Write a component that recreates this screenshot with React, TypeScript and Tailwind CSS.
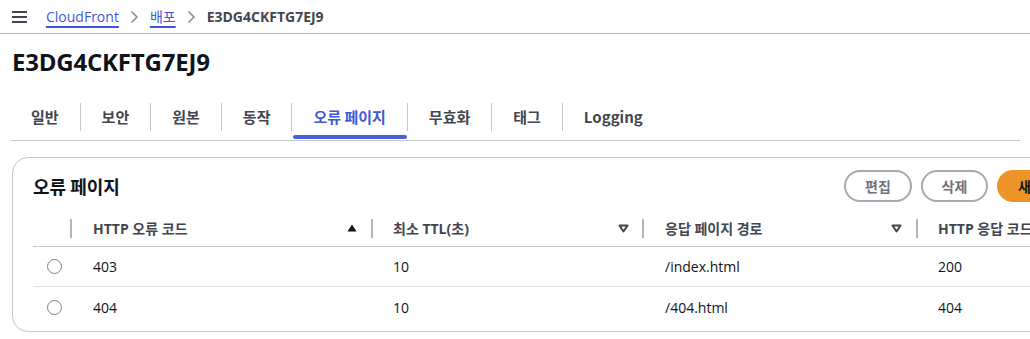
import React from 'react';

const tabs = ['일반', '보안', '원본', '동작', '오류 페이지', '무효화', '태그', 'Logging'];

const rows = [
  { code: '403', ttl: '10', path: '/index.html', resp: '200' },
  { code: '404', ttl: '10', path: '/404.html', resp: '404' },
];

const Chevron = () => (
  <svg width="9" height="14" viewBox="0 0 9 14" className="mx-[11px]">
    <polyline points="1.5,1.5 7,7 1.5,12.5" fill="none" stroke="#8c8c94" strokeWidth="1.6" />
  </svg>
);

const SortUp = () => (
  <svg width="10" height="8" viewBox="0 0 10 8">
    <polygon points="0.5,7.5 5,0.5 9.5,7.5" fill="#0f141a" />
  </svg>
);

const SortNone = () => (
  <svg width="11" height="9" viewBox="0 0 11 9">
    <polygon points="1.5,1.5 9.5,1.5 5.5,7.5" fill="none" stroke="#424650" strokeWidth="2" strokeLinejoin="round" />
  </svg>
);

const Divider = () => <span className="block h-[19px] w-[2px] bg-[#b4b4bb]" />;

export default function App() {
  return (
    <div className="w-[1030px] h-[339px] overflow-hidden bg-white text-[#0f141a] font-['Open_Sans','Noto_Sans_CJK_KR',sans-serif]">
      {/* breadcrumbs */}
      <div className="flex h-[34px] items-center border-b border-[#b4b4bb] pl-3">
        <svg width="15" height="12" viewBox="0 0 15 12">
          <path d="M0 1h15M0 6h15M0 11h15" stroke="#424650" strokeWidth="2" />
        </svg>
        <a className="ml-[19px] text-[14px] text-[#3f58d6] underline underline-offset-[4px] decoration-[1.5px]">CloudFront</a>
        <Chevron />
        <a className="text-[14px] text-[#3f58d6] underline underline-offset-[4px] decoration-[1.5px]">배포</a>
        <Chevron />
        <span className="text-[14px] font-bold text-[#424650]">E3DG4CKFTG7EJ9</span>
      </div>

      {/* title */}
      <h1 className="pl-3 pt-[13px] text-[24px] font-bold leading-[30px] tracking-[-0.2px]">E3DG4CKFTG7EJ9</h1>

      {/* tabs */}
      <div className="mx-[10px] mt-[23px] flex h-[41px] border-b border-[#c6c6cd]">
        {tabs.map((t, i) => {
          const active = t === '오류 페이지';
          return (
            <div key={t} className="relative flex items-center pb-[6px]">
              {i > 0 && <span className="block h-[28px] w-px bg-[#c6c6cd]" />}
              <span
                className={`px-[21px] text-[15px] font-bold font-['Noto_Sans_CJK_KR',sans-serif] ${
                  active ? 'text-[#3f58d6]' : 'text-[#424650]'
                }`}
              >
                {t}
              </span>
              {active && <span className="absolute bottom-[1px] left-[2px] right-0 h-[4px] rounded-full bg-[#4a5fe0]" />}
            </div>
          );
        })}
      </div>

      {/* card */}
      <div className="ml-3 mt-[16px] w-[1120px] rounded-2xl border border-[#c6c6cd] pb-[4px]">
        <div className="flex items-center justify-between pl-5 pr-5 pt-[12px]">
          <h2 className="text-[18px] font-bold font-['Noto_Sans_CJK_KR',sans-serif]">오류 페이지</h2>
          <div className="mr-[14px] flex gap-[9px]">
            <button className="h-[32px] w-[68px] rounded-full border-2 border-[#a8a8b0] text-[14px] font-bold text-[#6f727a]">편집</button>
            <button className="h-[32px] w-[67px] rounded-full border-2 border-[#a8a8b0] text-[14px] font-bold text-[#6f727a]">삭제</button>
            <button className="h-[32px] w-[100px] rounded-full bg-[#ec9427] pl-[21px] text-left text-[14px] font-bold text-[#0f141a]">새로 만들기</button>
          </div>
        </div>

        <div className="mt-[11px] pl-5">
          {/* header */}
          <div className="flex h-[34px] items-center border-b border-[#c6c6cd] pb-[3px] text-[14px] font-bold text-[#424650]">
            <div className="flex w-[39px] justify-end"><Divider /></div>
            <div className="flex w-[301px] items-center pl-[21px]">
              <span className="flex-1">HTTP 오류 코드</span>
              <SortUp />
              <span className="ml-[14px]"><Divider /></span>
            </div>
            <div className="flex w-[271px] items-center pl-[20px]">
              <span className="flex-1">최소 TTL(초)</span>
              <SortNone />
              <span className="ml-[13px]"><Divider /></span>
            </div>
            <div className="flex w-[274px] items-center pl-[21px]">
              <span className="flex-1">응답 페이지 경로</span>
              <SortNone />
              <span className="ml-[14px]"><Divider /></span>
            </div>
            <div className="pl-[20px]">HTTP 응답 코드</div>
          </div>

          {rows.map((r, i) => (
            <div
              key={r.code}
              className={`flex h-[40px] items-center text-[14px] ${i === 0 ? 'border-b border-[#e2e2e6]' : ''}`}
            >
              <div className="flex w-[39px] justify-center pl-[3px]">
                <span className="block h-[15px] w-[15px] rounded-full border-[1.5px] border-[#7d8088]" />
              </div>
              <div className="w-[301px] pl-[21px]">{r.code}</div>
              <div className="w-[271px] pl-[20px]">{r.ttl}</div>
              <div className="w-[274px] pl-[21px]">{r.path}</div>
              <div className="pl-[20px]">{r.resp}</div>
            </div>
          ))}
        </div>
      </div>
    </div>
  );
}
